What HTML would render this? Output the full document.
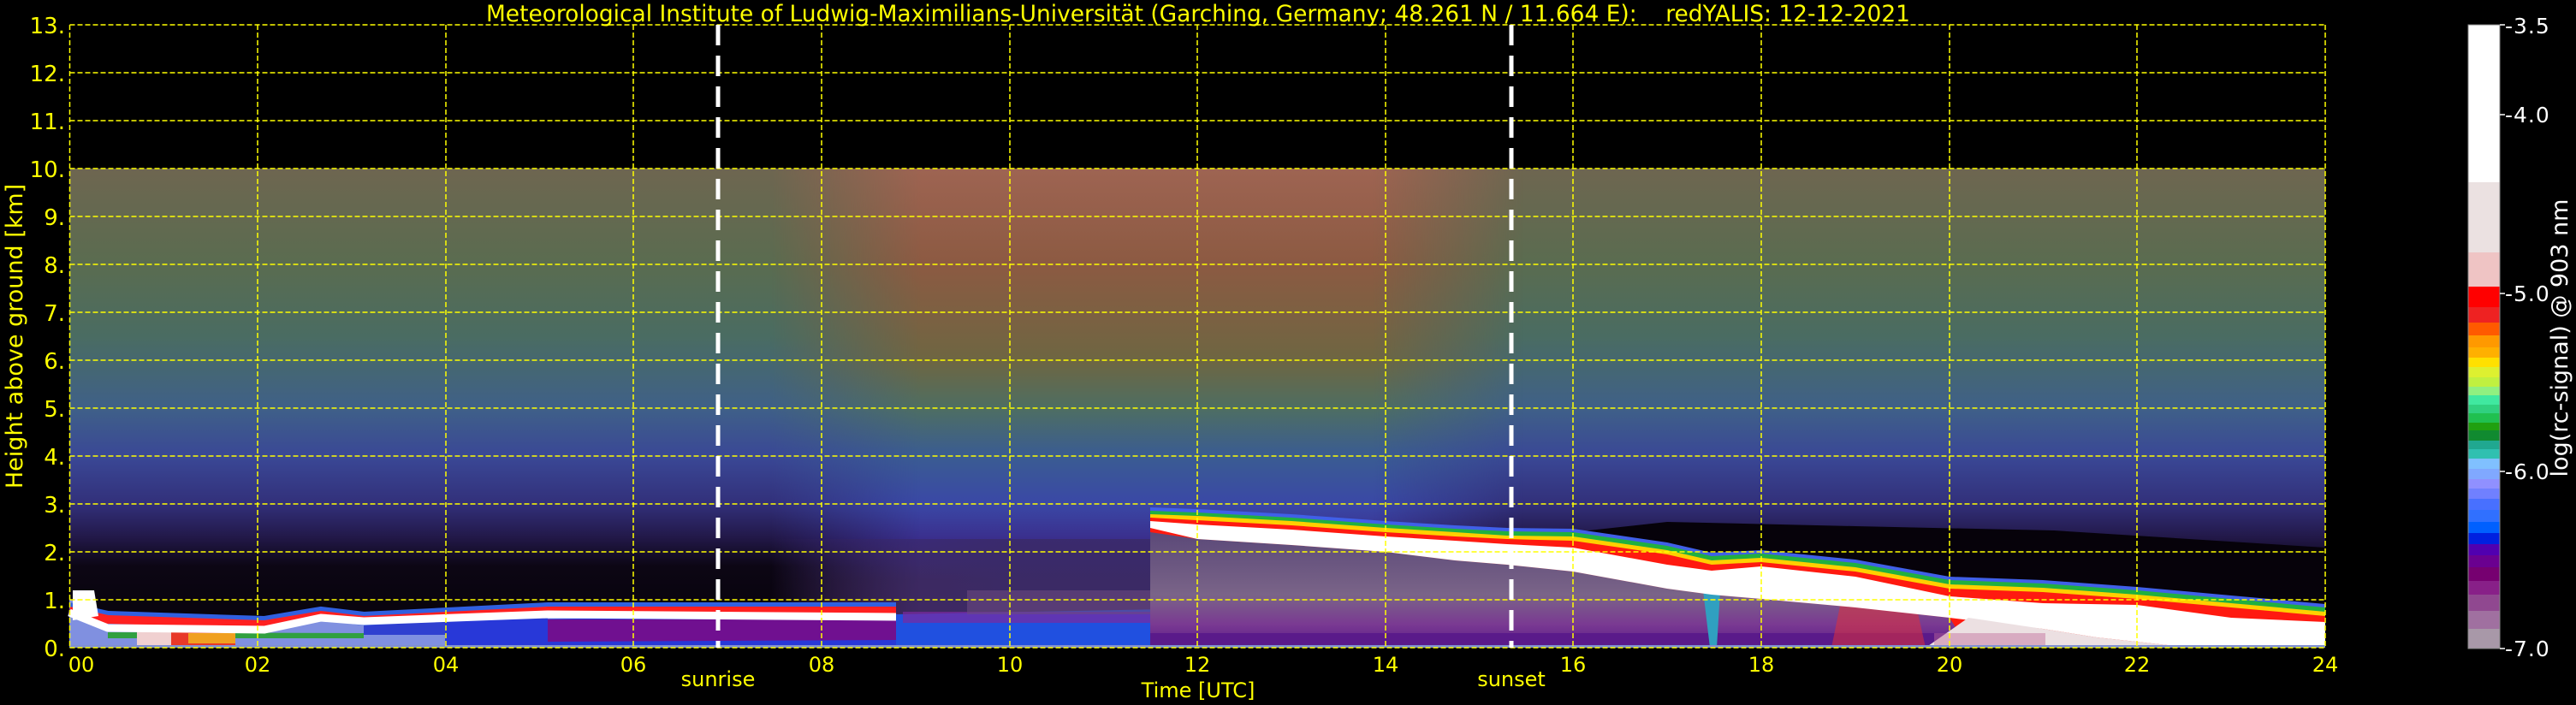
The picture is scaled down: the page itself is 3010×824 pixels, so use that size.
<!DOCTYPE html>
<html><head><meta charset="utf-8"><style>
html,body{margin:0;padding:0;background:#000;}
svg{display:block;}
text{font-family:"DejaVu Sans","Liberation Sans",sans-serif;}
</style></head><body>
<svg width="3010" height="824" viewBox="0 0 3010 824" xmlns="http://www.w3.org/2000/svg">
<defs>
<linearGradient id="night" x1="0" y1="197" x2="0" y2="757" gradientUnits="userSpaceOnUse">
<stop offset="0" stop-color="#6e6650"/>
<stop offset="0.2" stop-color="#5a6c50"/>
<stop offset="0.35" stop-color="#4a6c62"/>
<stop offset="0.5" stop-color="#3f6088"/>
<stop offset="0.6" stop-color="#3a4896"/>
<stop offset="0.7" stop-color="#32307a"/>
<stop offset="0.77" stop-color="#221848"/>
<stop offset="0.83" stop-color="#0c0614"/>
<stop offset="1" stop-color="#060208"/>
</linearGradient>
<linearGradient id="day" x1="0" y1="197" x2="0" y2="757" gradientUnits="userSpaceOnUse">
<stop offset="0" stop-color="#9e6452"/>
<stop offset="0.2" stop-color="#8c5a42"/>
<stop offset="0.4" stop-color="#6e6642"/>
<stop offset="0.5" stop-color="#4e6e62"/>
<stop offset="0.6" stop-color="#3a5c92"/>
<stop offset="0.7" stop-color="#3a48a6"/>
<stop offset="0.78" stop-color="#3a2c8a"/>
<stop offset="0.86" stop-color="#3e2a62"/>
<stop offset="1" stop-color="#4a2a62"/>
</linearGradient>
<linearGradient id="dayMaskG" x1="900" y1="0" x2="1780" y2="0" gradientUnits="userSpaceOnUse">
<stop offset="0" stop-color="#000"/>
<stop offset="0.2" stop-color="#fff"/>
<stop offset="0.8" stop-color="#fff"/>
<stop offset="1" stop-color="#000"/>
</linearGradient>
<mask id="dayMask"><rect x="81" y="197" width="2636" height="560" fill="url(#dayMaskG)"/></mask>
<linearGradient id="under" x1="0" y1="620" x2="0" y2="757" gradientUnits="userSpaceOnUse">
<stop offset="0" stop-color="#5a4878"/>
<stop offset="0.55" stop-color="#7a6488"/>
<stop offset="0.8" stop-color="#7a3a92"/>
<stop offset="1" stop-color="#5a1a8a"/>
</linearGradient>
<linearGradient id="purpH" x1="900" y1="0" x2="1800" y2="0" gradientUnits="userSpaceOnUse">
<stop offset="0" stop-color="#3a2458" stop-opacity="0"/>
<stop offset="0.3" stop-color="#3a2a66" stop-opacity="0.8"/>
<stop offset="1" stop-color="#3a2a66" stop-opacity="0.8"/>
</linearGradient>
</defs>

<rect x="81.5" y="197" width="2635.5" height="560" fill="url(#night)"/>
<rect x="81.5" y="197" width="2635.5" height="560" fill="url(#day)" mask="url(#dayMask)"/>
<rect x="900" y="630" width="900" height="90" fill="url(#purpH)"/>

<!-- LEFT low layer -->
<polygon points="81,700 126,722 309,728 375,717 425,723 640,712 1047,715 1047,757 81,757" fill="#8090e0"/>
<polygon points="425,727 640,718 640,742 425,742" fill="#3040d0"/>
<polygon points="520,725 1047,718 1047,757 520,757" fill="#2838d8"/>
<polygon points="640,724 1047,724 1047,748 640,750" fill="#701090"/>
<polygon points="126,739 425,740 425,746 126,746" fill="#30a040"/>
<rect x="168" y="737" width="107" height="18" fill="#e83828"/>
<rect x="160" y="737" width="40" height="18" fill="#f0d0d0"/>
<rect x="220" y="740" width="55" height="12" fill="#f0a020"/>
<polyline points="81,712 126,722 309,728 375,717 425,723 640,712 1047,712" fill="none" stroke="#3060e0" stroke-width="16"/>
<polyline points="81,714 126,724 309,730 375,719 425,725 640,714 1047,714" fill="none" stroke="#ff2020" stroke-width="10"/>
<polyline points="81,716 126,734 309,736 375,722 425,726 640,718 1047,721" fill="none" stroke="#ffffff" stroke-width="9"/>
<polygon points="85,690 110,690 115,720 85,725" fill="#ffffff"/>

<!-- middle low -->
<polygon points="1047,718 1360,712 1360,757 1047,757" fill="#2050e0"/>
<polygon points="1055,715 1353,715 1353,728 1055,728" fill="#7a2aa0" opacity="0.7"/>
<rect x="1130" y="690" width="230" height="28" fill="#6a4a80" opacity="0.6"/>

<!-- RIGHT -->
<polygon points="1838,622 1948,610 2168,615 2400,620 2717,640 2717,720 2607,710 2497,700 2387,692 2278,688 2168,668 2058,657 2000,660 1948,648 1838,632" fill="#06020a"/>
<g>
<polygon points="1344,593 1399,595 1509,601 1619,609 1700,614 1761,617 1838,618 1948,634 2000,646 2058,643 2168,654 2278,674 2387,678 2497,686 2607,696 2717,706 2717,757 1344,757" fill="#4060e8"/>
<polygon points="1344,597 1399,599 1509,605 1619,613 1700,618 1761,621 1838,622 1948,638 2000,650 2058,647 2168,658 2278,678 2387,682 2497,690 2607,700 2717,710 2717,757 1344,757" fill="#20b040"/>
<polygon points="1344,601 1399,603 1509,609 1619,617 1700,622 1761,626 1838,627 1948,643 2000,655 2058,652 2168,663 2278,683 2387,687 2497,695 2607,705 2717,715 2717,757 1344,757" fill="#ffd000"/>
<polygon points="1344,605 1399,608 1509,614 1619,622 1700,627 1761,630 1838,632 1948,648 2000,660 2058,657 2168,668 2278,688 2387,692 2497,700 2607,710 2717,720 2717,757 1344,757" fill="#ff1a10"/>
</g>
<polygon points="1344,622 1399,630 1509,637 1619,645 1700,655 1761,660 1838,668 1948,688 2000,695 2058,700 2168,710 2278,722 2300,757 1344,757" fill="url(#under)"/>
<polygon points="1344,740 2290,740 2295,757 1344,757" fill="#5a1a8a"/>
<polygon points="1990,690 2010,690 2006,757 1998,757" fill="#30a0c0"/>
<polygon points="2150,708 2240,712 2250,757 2140,757" fill="#e0303a" opacity="0.55"/>
<!-- white band -->
<polygon points="1344,609 1399,613 1509,619 1619,627 1700,632 1761,636 1838,640 1948,660 2000,667 2058,662 2168,674 2278,697 2387,705 2497,707 2607,722 2717,727 2717,757 2560,757 2450,745 2387,735 2278,722 2168,710 2058,700 2000,695 1948,688 1838,668 1761,660 1700,655 1619,645 1509,637 1399,630 1344,617" fill="#ffffff"/>
<polygon points="2300,722 2387,735 2450,745 2560,757 2250,757" fill="#ece0e2"/>
<rect x="2260" y="740" width="130" height="17" fill="#c06a9a" opacity="0.45"/>
<rect x="81.5" y="754" width="2635.5" height="3" fill="#8090d0"/>

<!-- grid -->
<g stroke="#ffff00" stroke-width="1.5" stroke-dasharray="6 3" fill="none">
<line x1="81.5" y1="29" x2="2717" y2="29"/>
<line x1="81.5" y1="85" x2="2717" y2="85"/>
<line x1="81.5" y1="141" x2="2717" y2="141"/>
<line x1="81.5" y1="197" x2="2717" y2="197"/>
<line x1="81.5" y1="253" x2="2717" y2="253"/>
<line x1="81.5" y1="309" x2="2717" y2="309"/>
<line x1="81.5" y1="365" x2="2717" y2="365"/>
<line x1="81.5" y1="421" x2="2717" y2="421"/>
<line x1="81.5" y1="477" x2="2717" y2="477"/>
<line x1="81.5" y1="533" x2="2717" y2="533"/>
<line x1="81.5" y1="589" x2="2717" y2="589"/>
<line x1="81.5" y1="645" x2="2717" y2="645"/>
<line x1="81.5" y1="701" x2="2717" y2="701"/>
<line x1="81.5" y1="757" x2="2717" y2="757"/>
<line x1="81.5" y1="29" x2="81.5" y2="757"/>
<line x1="301" y1="29" x2="301" y2="757"/>
<line x1="521" y1="29" x2="521" y2="757"/>
<line x1="740" y1="29" x2="740" y2="757"/>
<line x1="960" y1="29" x2="960" y2="757"/>
<line x1="1180" y1="29" x2="1180" y2="757"/>
<line x1="1399" y1="29" x2="1399" y2="757"/>
<line x1="1619" y1="29" x2="1619" y2="757"/>
<line x1="1838" y1="29" x2="1838" y2="757"/>
<line x1="2058" y1="29" x2="2058" y2="757"/>
<line x1="2278" y1="29" x2="2278" y2="757"/>
<line x1="2497" y1="29" x2="2497" y2="757"/>
<line x1="2717" y1="29" x2="2717" y2="757"/>
</g>
<g stroke="#ffffff" stroke-width="5" stroke-dasharray="24 12">
<line x1="839" y1="29" x2="839" y2="757"/>
<line x1="1766" y1="29" x2="1766" y2="757"/>
</g>

<text x="568" y="25" font-size="27" fill="#ffff00" textLength="1664" lengthAdjust="spacingAndGlyphs" xml:space="preserve">Meteorological Institute of Ludwig-Maximilians-Universität (Garching, Germany; 48.261 N / 11.664 E):    redYALIS: 12-12-2021</text>

<g font-size="26" fill="#ffff00" text-anchor="end">
<text x="76" y="39">13.</text>
<text x="76" y="95">12.</text>
<text x="76" y="151">11.</text>
<text x="76" y="207">10.</text>
<text x="76" y="263">9.</text>
<text x="76" y="319">8.</text>
<text x="76" y="375">7.</text>
<text x="76" y="431">6.</text>
<text x="76" y="487">5.</text>
<text x="76" y="543">4.</text>
<text x="76" y="599">3.</text>
<text x="76" y="655">2.</text>
<text x="76" y="711">1.</text>
<text x="76" y="767">0.</text>
</g>
<text transform="translate(26,393) rotate(-90)" font-size="27" fill="#ffff00" text-anchor="middle">Height above ground [km]</text>

<g font-size="24" fill="#ffff00" text-anchor="middle">
<text x="95" y="785">00</text>
<text x="301" y="785">02</text>
<text x="521" y="785">04</text>
<text x="740" y="785">06</text>
<text x="960" y="785">08</text>
<text x="1180" y="785">10</text>
<text x="1399" y="785">12</text>
<text x="1619" y="785">14</text>
<text x="1838" y="785">16</text>
<text x="2058" y="785">18</text>
<text x="2278" y="785">20</text>
<text x="2497" y="785">22</text>
<text x="2717" y="785">24</text>
<text x="839" y="802">sunrise</text>
<text x="1766" y="802">sunset</text>
<text x="1400" y="815">Time [UTC]</text>
</g>

<g>
<rect x="2884" y="29" width="37" height="184" fill="#ffffff"/>
<rect x="2884" y="213" width="37" height="82" fill="#ebe1e1"/>
<rect x="2884" y="295" width="37" height="40" fill="#efc4c4"/>
<rect x="2884" y="335" width="37" height="24" fill="#ff0000"/>
<rect x="2884" y="359" width="37" height="18" fill="#ee2222"/>
<rect x="2884" y="377" width="37" height="15" fill="#ff5a00"/>
<rect x="2884" y="392" width="37" height="14" fill="#ff9900"/>
<rect x="2884" y="406" width="37" height="12" fill="#ffb000"/>
<rect x="2884" y="418" width="37" height="11" fill="#ffe000"/>
<rect x="2884" y="429" width="37" height="12" fill="#ddf030"/>
<rect x="2884" y="441" width="37" height="11" fill="#c0f040"/>
<rect x="2884" y="452" width="37" height="10" fill="#90f080"/>
<rect x="2884" y="462" width="37" height="11" fill="#40e8a0"/>
<rect x="2884" y="473" width="37" height="10" fill="#30d080"/>
<rect x="2884" y="483" width="37" height="11" fill="#20c050"/>
<rect x="2884" y="494" width="37" height="9" fill="#20a010"/>
<rect x="2884" y="503" width="37" height="12" fill="#108a30"/>
<rect x="2884" y="515" width="37" height="10" fill="#20a890"/>
<rect x="2884" y="525" width="37" height="11" fill="#30c0b0"/>
<rect x="2884" y="536" width="37" height="12" fill="#80c0ff"/>
<rect x="2884" y="548" width="37" height="12" fill="#80a8ff"/>
<rect x="2884" y="560" width="37" height="11" fill="#9090ff"/>
<rect x="2884" y="571" width="37" height="12" fill="#7080ff"/>
<rect x="2884" y="583" width="37" height="13" fill="#4870ff"/>
<rect x="2884" y="596" width="37" height="14" fill="#3070ff"/>
<rect x="2884" y="610" width="37" height="13" fill="#0060ff"/>
<rect x="2884" y="623" width="37" height="13" fill="#0020e0"/>
<rect x="2884" y="636" width="37" height="13" fill="#5000b0"/>
<rect x="2884" y="649" width="37" height="14" fill="#6a0090"/>
<rect x="2884" y="663" width="37" height="16" fill="#760070"/>
<rect x="2884" y="679" width="37" height="16" fill="#882088"/>
<rect x="2884" y="695" width="37" height="19" fill="#904890"/>
<rect x="2884" y="714" width="37" height="21" fill="#a070a0"/>
<rect x="2884" y="735" width="37" height="23" fill="#a898a8"/>
<rect x="2884" y="29" width="37" height="729" fill="none" stroke="#888" stroke-width="1"/>
</g>
<g stroke="#ffffff" stroke-width="1.5">
<line x1="2921" y1="29" x2="2927" y2="29"/>
<line x1="2921" y1="134" x2="2927" y2="134"/>
<line x1="2921" y1="343" x2="2927" y2="343"/>
<line x1="2921" y1="551" x2="2927" y2="551"/>
<line x1="2921" y1="758" x2="2927" y2="758"/>
</g>
<g font-size="25" fill="#ffffff" letter-spacing="1">
<text x="2927" y="39">-3.5</text>
<text x="2927" y="143">-4.0</text>
<text x="2927" y="352">-5.0</text>
<text x="2927" y="560">-6.0</text>
<text x="2927" y="767">-7.0</text>
</g>
<text transform="translate(3000,395) rotate(-90)" font-size="27" fill="#ffffff" text-anchor="middle">log(rc-signal) @ 903 nm</text>
</svg>
</body></html>
